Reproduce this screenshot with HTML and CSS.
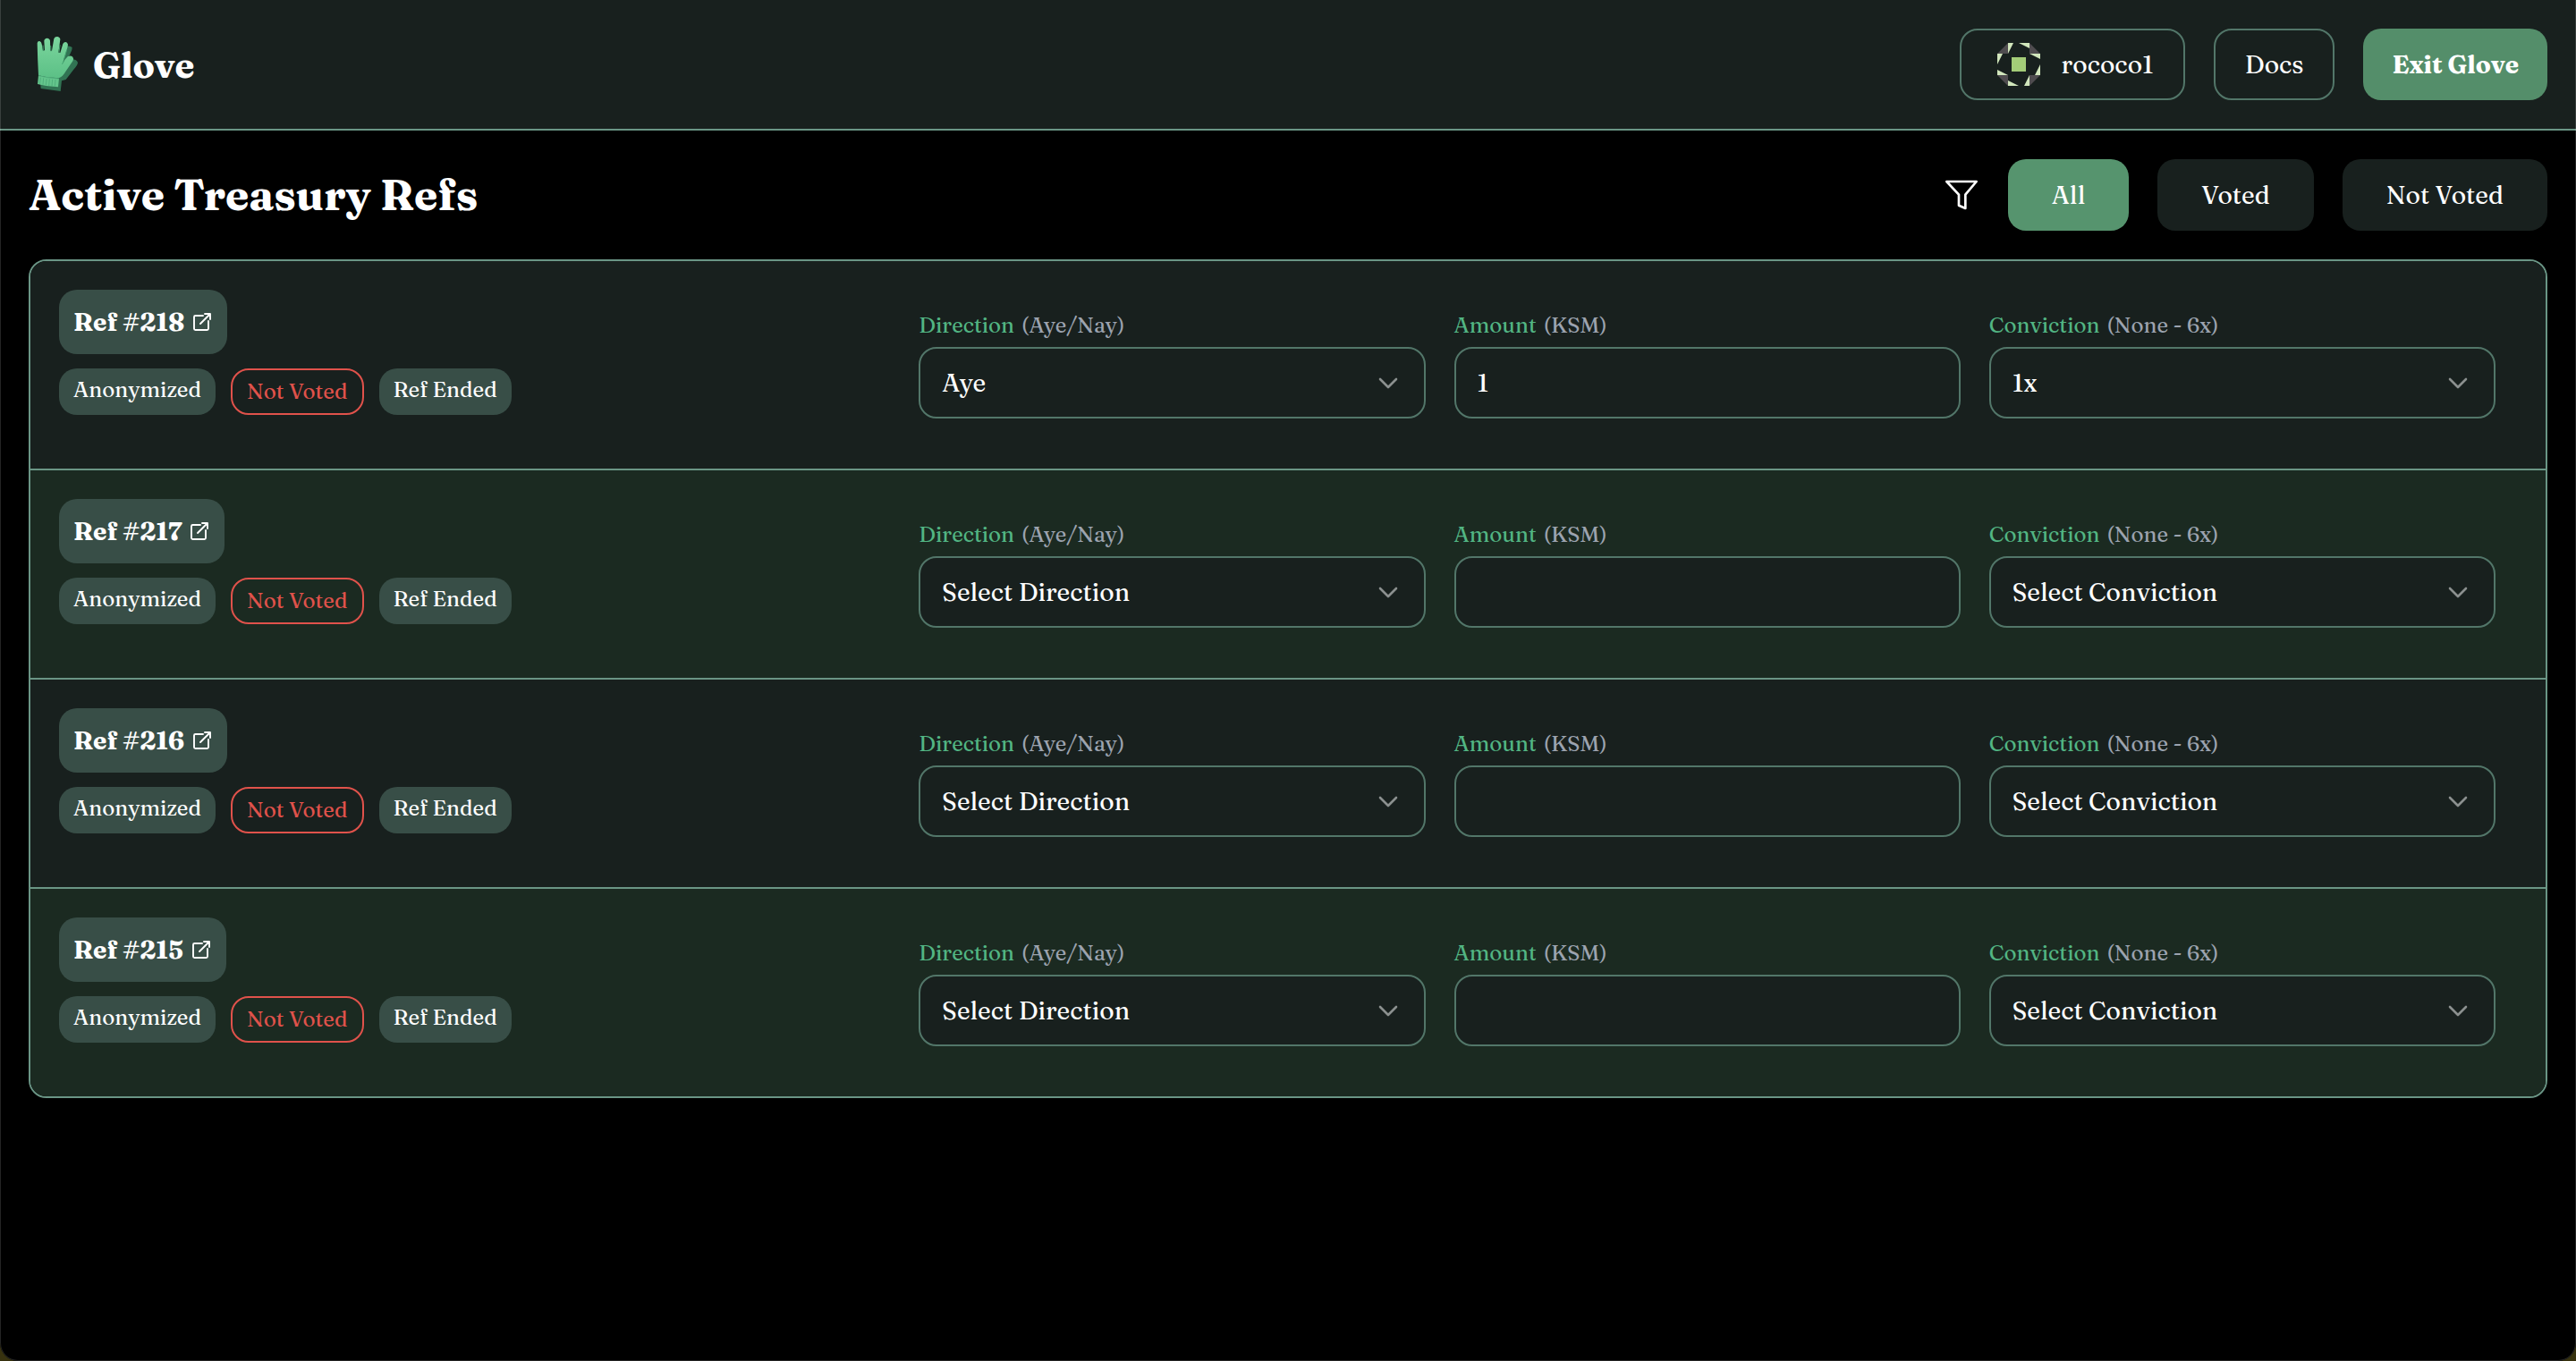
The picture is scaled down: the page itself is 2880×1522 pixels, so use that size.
FILE: index.html
```html
<!DOCTYPE html>
<html lang="en">
<head>
<meta charset="utf-8">
<title>Glove</title>
<link rel="stylesheet" href="styles.css">
</head>
<body>
<svg class="defs" aria-hidden="true">
  <symbol id="external" viewBox="0 0 24 24"><path d="M13 5H4.500Q3 5 3 6.500V19.500Q3 21 4.500 21H17.500Q19 21 19 19.500V11M15 3H21V9M21 3L10 14" fill="none" stroke="currentColor" stroke-width="1.900" stroke-linecap="round" stroke-linejoin="round"/></symbol>
  <symbol id="chevron" viewBox="0 0 24 14"><path d="M3 3L12 12L21 3" fill="none" stroke="currentColor" stroke-width="2.600" stroke-linecap="round" stroke-linejoin="round"/></symbol>
</svg>
<header class="topbar">
  <a class="brand" href="#">
    <svg class="brand-icon" viewBox="36 60 192 192" aria-hidden="true">
      <defs>
        <linearGradient id="palm" x1="0" y1="0" x2="0" y2="1"><stop offset="0" stop-color="#7bd69d"/><stop offset="1" stop-color="#5cc086"/></linearGradient>
      </defs>
      <g fill="#317353">
        <path d="M160 98Q172 90 182 99Q183 106 176 119L168 136L183 140Q196 137 201 150Q200 160 187 173L161 207L147 211L143 246L77 237L75 215L110 180Z"/>
      </g>
      <path fill="url(#palm)" d="M65 85Q66 77 73 78Q79 80 80 88L84 110L90 109L88 77Q89 69 98 68Q107 69 108 77L109 110L114 110L121 70Q124 62 133 63Q142 65 142 73L136 116L142 117L151 87Q157 77 165 83Q170 88 167 96L158 128Q154 139 151 148L167 130Q177 124 184 131Q189 137 184 145L160 180Q151 196 139 201Q105 203 69 193Q66 140 65 85Z"/>
      <path fill="none" stroke="#3f9d6b" stroke-width="3" stroke-linecap="round" d="M84 93L85 110M110 94L111 111M141 92L138 116M164 108L155 138M155 144L149 154"/>
      <path fill="#64c58c" d="M69 193Q100 201 138 203L135 232Q98 231 66 222Z"/>
      <path fill="none" stroke="#46a574" stroke-width="2" d="M69 194Q100 202 138 204M76 200L74 221M86 202L84 224M96 204L94 226M106 205L104 228M116 206L114 229M126 207L124 230"/>
    </svg>
    <span>Glove</span>
  </a>
  <nav class="actions" aria-label="Account">
    <button class="btn btn-outline btn-account" type="button">
      <svg class="identicon" viewBox="0 0 144 144" aria-hidden="true">
        <path fill="#4f4c4f" d="M36 0V36H0ZM108 0L144 36H108ZM0 108H36V144ZM108 108H144L108 144Z"/>
        <path fill="#d1e6bc" d="M36 0H54L36 36ZM72 0H108V18ZM0 36H18L0 72ZM0 90L36 108H0ZM108 36H144V54ZM144 72V108H126ZM36 126L72 144H36ZM108 108V144H90Z"/>
        <path fill="#a3cc78" d="M48 48H96V96H48Z"/>
      </svg>
      <span>rococo1</span>
    </button>
    <button class="btn btn-outline" type="button">Docs</button>
    <button class="btn btn-exit" type="button">Exit Glove</button>
  </nav>
</header>
<main class="content">
  <div class="heading">
    <h1>Active Treasury Refs</h1>
    <div class="filters" role="group" aria-label="Filter refs">
      <svg class="funnel" viewBox="18 24 120 120" aria-hidden="true"><path d="M28 39H128L91 83V129L69 119V83Z" fill="none" stroke="currentColor" stroke-width="8" stroke-linejoin="round"/></svg>
      <button class="btn btn-filter active" type="button">All</button>
      <button class="btn btn-filter" type="button">Voted</button>
      <button class="btn btn-filter" type="button">Not Voted</button>
    </div>
  </div>
  <section class="refs">
    <article class="ref">
      <div class="summary">
        <a class="ref-link" href="#">Ref #218 <svg aria-hidden="true"><use href="#external"/></svg></a>
        <div class="tags"><span class="tag">Anonymized</span><span class="tag tag-alert">Not Voted</span><span class="tag">Ref Ended</span></div>
      </div>
      <div class="field">
        <label for="d218">Direction <span>(Aye/Nay)</span></label>
        <div class="control"><select id="d218"><option>Select Direction</option><option selected>Aye</option><option>Nay</option></select><svg aria-hidden="true"><use href="#chevron"/></svg></div>
      </div>
      <div class="field">
        <label for="a218">Amount <span>(KSM)</span></label>
        <div class="control"><input id="a218" type="text" value="1"></div>
      </div>
      <div class="field">
        <label for="c218">Conviction <span>(None - 6x)</span></label>
        <div class="control"><select id="c218"><option>Select Conviction</option><option selected>1x</option></select><svg aria-hidden="true"><use href="#chevron"/></svg></div>
      </div>
    </article>
    <article class="ref">
      <div class="summary">
        <a class="ref-link" href="#">Ref #217 <svg aria-hidden="true"><use href="#external"/></svg></a>
        <div class="tags"><span class="tag">Anonymized</span><span class="tag tag-alert">Not Voted</span><span class="tag">Ref Ended</span></div>
      </div>
      <div class="field">
        <label for="d217">Direction <span>(Aye/Nay)</span></label>
        <div class="control"><select id="d217"><option>Select Direction</option><option>Aye</option><option>Nay</option></select><svg aria-hidden="true"><use href="#chevron"/></svg></div>
      </div>
      <div class="field">
        <label for="a217">Amount <span>(KSM)</span></label>
        <div class="control"><input id="a217" type="text"></div>
      </div>
      <div class="field">
        <label for="c217">Conviction <span>(None - 6x)</span></label>
        <div class="control"><select id="c217"><option>Select Conviction</option><option>1x</option></select><svg aria-hidden="true"><use href="#chevron"/></svg></div>
      </div>
    </article>
    <article class="ref">
      <div class="summary">
        <a class="ref-link" href="#">Ref #216 <svg aria-hidden="true"><use href="#external"/></svg></a>
        <div class="tags"><span class="tag">Anonymized</span><span class="tag tag-alert">Not Voted</span><span class="tag">Ref Ended</span></div>
      </div>
      <div class="field">
        <label for="d216">Direction <span>(Aye/Nay)</span></label>
        <div class="control"><select id="d216"><option>Select Direction</option><option>Aye</option><option>Nay</option></select><svg aria-hidden="true"><use href="#chevron"/></svg></div>
      </div>
      <div class="field">
        <label for="a216">Amount <span>(KSM)</span></label>
        <div class="control"><input id="a216" type="text"></div>
      </div>
      <div class="field">
        <label for="c216">Conviction <span>(None - 6x)</span></label>
        <div class="control"><select id="c216"><option>Select Conviction</option><option>1x</option></select><svg aria-hidden="true"><use href="#chevron"/></svg></div>
      </div>
    </article>
    <article class="ref">
      <div class="summary">
        <a class="ref-link" href="#">Ref #215 <svg aria-hidden="true"><use href="#external"/></svg></a>
        <div class="tags"><span class="tag">Anonymized</span><span class="tag tag-alert">Not Voted</span><span class="tag">Ref Ended</span></div>
      </div>
      <div class="field">
        <label for="d215">Direction <span>(Aye/Nay)</span></label>
        <div class="control"><select id="d215"><option>Select Direction</option><option>Aye</option><option>Nay</option></select><svg aria-hidden="true"><use href="#chevron"/></svg></div>
      </div>
      <div class="field">
        <label for="a215">Amount <span>(KSM)</span></label>
        <div class="control"><input id="a215" type="text"></div>
      </div>
      <div class="field">
        <label for="c215">Conviction <span>(None - 6x)</span></label>
        <div class="control"><select id="c215"><option>Select Conviction</option><option>1x</option></select><svg aria-hidden="true"><use href="#chevron"/></svg></div>
      </div>
    </article>
  </section>
</main>
</body>
</html>
```
FILE: styles.css
```css
:root {
  --surface: #18201e;
  --surface-alt: #1b2a21;
  --line: #6a9585;
  --line-soft: #527669;
  --badge: #384e47;
  --alert: #e0524b;
}

* { box-sizing: border-box; }

html { background: #37320f; }

body {
  position: relative;
  margin: 0;
  min-height: 100vh;
  overflow-x: hidden;
  background: #000;
  border-radius: 0 0 20px 20px;
  color: #fff;
  font-family: Fraunces, "Liberation Serif", serif;
  font-size: 28px;
  font-weight: 500;
}

/* Hairline frame round the window */
body::after {
  content: "";
  position: absolute;
  inset: 0;
  border: 1px solid rgba(255, 255, 255, 0.14);
  border-top: 0;
  border-radius: 0 0 20px 20px;
  pointer-events: none;
}

button, input, select { font: inherit; color: inherit; }
a { color: inherit; text-decoration: none; }
.defs { display: none; }

.topbar {
  display: flex;
  align-items: center;
  justify-content: space-between;
  padding: 32px;
  background: var(--surface);
  border-bottom: 2px solid var(--line);
}

.brand {
  display: flex;
  align-items: center;
  gap: 8px;
  font-size: 40px;
  font-weight: 700;
}
.brand-icon { width: 64px; height: 64px; }

.actions, .filters {
  display: flex;
  align-items: center;
  gap: 32px;
}

.btn {
  display: flex;
  align-items: center;
  justify-content: center;
  height: 80px;
  padding: 0 32px;
  border: 0;
  border-radius: 20px;
  background: var(--surface);
  white-space: nowrap;
  cursor: pointer;
}
.btn-outline {
  padding: 0 33px;
  border: 2px solid var(--line-soft);
}
.btn-account { gap: 24px; padding-left: 40px; }
.btn-exit { background: #548e6a; font-weight: 700; }
.btn-filter { padding: 0 49px; }
.btn-filter.active { background: #56946e; }
.identicon { width: 48px; height: 48px; }
.funnel { width: 40px; height: 40px; }

.content { padding: 32px; }

.heading {
  display: flex;
  align-items: center;
  justify-content: space-between;
  margin-bottom: 32px;
}
h1 { margin: 0; font-size: 48px; line-height: 64px; }

.refs {
  border: 2px solid var(--line);
  border-radius: 20px;
  overflow: hidden;
}

.ref {
  display: grid;
  grid-template-columns: minmax(0, 929fr) repeat(3, minmax(0, 566fr));
  align-items: center;
  gap: 32px;
  padding: 32px 56px 32px 32px;
  background: var(--surface);
}
.ref:nth-child(even) { background: var(--surface-alt); }
.ref + .ref { border-top: 2px solid var(--line); }

.summary {
  display: flex;
  flex-direction: column;
  align-items: flex-start;
  gap: 16px;
  min-height: 168px;
}

.ref-link {
  display: flex;
  align-items: center;
  gap: 8px;
  height: 72px;
  padding: 0 16px;
  border-radius: 20px;
  background: var(--badge);
  font-weight: 700;
}
.ref-link svg { width: 24px; height: 24px; }

.tags { display: flex; gap: 17px; }
.tag {
  padding: 8px 16px;
  border-radius: 20px;
  background: var(--badge);
  font-size: 24px;
  line-height: 32px;
}
.tag-alert {
  border: 2px solid var(--alert);
  background: none;
  color: var(--alert);
}

.field label {
  display: flex;
  gap: 8px;
  margin-bottom: 8px;
  color: #52b583;
  font-size: 24px;
  line-height: 32px;
}
.field label span { color: #9ca3af; }

.control { position: relative; }
.control select, .control input {
  display: block;
  width: 100%;
  height: 80px;
  padding: 0 24px;
  border: 2px solid var(--line-soft);
  border-radius: 20px;
  background: var(--surface);
  appearance: none;
  outline: 0;
}
.control svg {
  position: absolute;
  top: 33px;
  right: 30px;
  width: 24px;
  height: 14px;
  color: #8b908f;
  pointer-events: none;
}
```
